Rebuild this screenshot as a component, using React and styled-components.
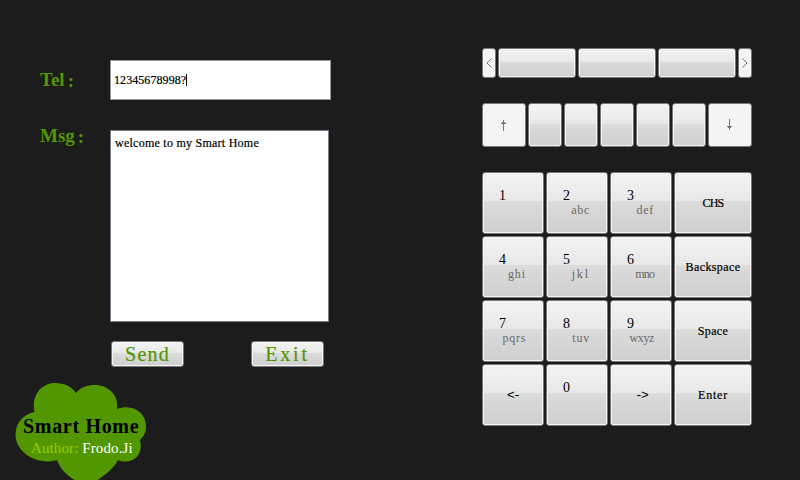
import React from "react";
import styled, { createGlobalStyle } from "styled-components";

const GlobalStyle = createGlobalStyle`
  * { box-sizing: border-box; }
  body { margin: 0; background: #1c1c1c; }
`;

const Screen = styled.main`
  width: 800px;
  height: 480px;
  display: grid;
  grid-template-columns: 482px 270px;
  overflow: hidden;
  background: #1c1c1c;
  font-family: "Liberation Serif", serif;
  font-size: 12px;
  color: #000;
`;

const Composer = styled.section`
  display: flex;
  flex-direction: column;
  height: 480px;
  padding-top: 60px;
`;

const Field = styled.div`
  display: grid;
  grid-template-columns: 70px auto;
  justify-content: start;
  padding-left: 40px;
  margin-bottom: ${(p) => p.$after}px;
`;

const Label = styled.label`
  display: flex;
  height: 24px;
  margin-top: ${(p) => p.$top}px;
  font-size: 19px;
  line-height: 24px;
  font-weight: bold;
  color: #529600;
`;

const Colon = styled.span`
  margin-left: 3px;
  line-height: 26px;
`;

const TelBox = styled.div`
  display: flex;
  align-items: center;
  width: 221px;
  height: 40px;
  padding-left: 3px;
  border: 1px solid #989599;
  background: #fff;
  letter-spacing: 0.07px;
  -webkit-text-stroke: 0.2px #000;
`;

const Caret = styled.span`
  width: 1px;
  height: 12px;
  background: #000;
`;

const MsgBox = styled.div`
  width: 219px;
  height: 192px;
  padding: 5px 4px;
  border: 1px solid #7a7d8a;
  background: #fff;
  line-height: 15px;
  letter-spacing: 0.25px;
  -webkit-text-stroke: 0.2px #000;
`;

const Actions = styled.div`
  display: flex;
  gap: 67px;
  padding-left: 111px;
`;

const Raised = styled.button`
  display: flex;
  align-items: center;
  justify-content: center;
  min-width: 0;
  padding: 0;
  border: 1px solid #777;
  border-radius: 3px;
  box-shadow: inset 0 0 0 1px #f6f6f6;
  background: ${(p) =>
    p.$flat
      ? "#f4f4f4"
      : "linear-gradient(#f3f3f3 0, #e8e8e8 47%, #dcdcdc 47%, #cecece 100%)"};
  color: inherit;
  font: inherit;
`;

const ActionButton = styled(Raised)`
  width: 73px;
  height: 26px;
  font-size: 20px;
  line-height: 24px;
  letter-spacing: ${(p) => p.$track}px;
  color: #529600;
  -webkit-text-stroke: 0.2px #529600;
`;

const Brand = styled.footer`
  display: grid;
  margin-top: auto;
  width: 160px;
  height: 100px;
  > * { grid-area: 1 / 1; }
`;

const Cloud = styled.svg`
  filter: blur(0.6px);
`;

const BrandText = styled.div`
  z-index: 1;
  padding: 35px 0 0 23px;
`;

const Title = styled.div`
  font-size: 20px;
  line-height: 23px;
  font-weight: bold;
  letter-spacing: 0.68px;
  white-space: nowrap;
`;

const Author = styled.div`
  padding-left: 8px;
  font-size: 15px;
  line-height: 20px;
  letter-spacing: 0.11px;
  color: #99cc00;
  white-space: nowrap;
`;

const Name = styled.span`
  color: #fff;
`;

const Keyboard = styled.section`
  display: flex;
  flex-direction: column;
  gap: 25px;
  padding-top: 48px;
`;

const Keys = styled.div`
  display: grid;
  gap: 2px;
  grid-template-columns: ${(p) => p.$columns};
  grid-auto-rows: ${(p) => p.$height}px;
`;

const DigitKey = styled(Raised)`
  flex-direction: column;
  align-items: stretch;
  justify-content: flex-start;
  padding: 15px 17px 0 16px;
`;

const Digit = styled.span`
  font-size: 14px;
  line-height: 16px;
  text-align: left;
`;

const Letters = styled.span`
  align-self: flex-end;
  line-height: 12px;
  letter-spacing: ${(p) => p.$track}px;
  color: #686868;
`;

const WordKey = styled(Raised)`
  letter-spacing: ${(p) => p.$track}px;
  -webkit-text-stroke: 0.2px #000;
`;

const Glyph = styled.svg`
  width: ${(p) => p.$w}px;
  height: 12px;
  fill: none;
  stroke: #777;
  stroke-width: 1;
`;

const SymbolKey = styled(Raised)`
  font-family: "Liberation Mono", monospace;
  font-size: 13px;
  letter-spacing: -1.8px;
`;

function Chevron({ right }) {
  return (
    <Glyph $w={6} viewBox="0 0 6 12">
      <path d={right ? "M.5 1.5 5 6 .5 10.5" : "M5.5 1.5 1 6l4.500 4.500"} />
    </Glyph>
  );
}

function Arrow({ down }) {
  return (
    <Glyph $w={8} viewBox="0 0 8 12">
      <path d={down ? "M3.500 0v11M1 7.500h5M2 8.500h3" : "M3.500 1v11M2 3.500h3M1 4.500h5"} />
    </Glyph>
  );
}

const pad = [
  ["1", ""], ["2", "abc", 0.7], ["3", "def", 0.7], ["CHS", -0.8],
  ["4", "ghi", 0.9], ["5", "jkl", 1.9], ["6", "mno", -0.9], ["Backspace", 0.4],
  ["7", "pqrs", 0.7], ["8", "tuv", 0.8], ["9", "wxyz", -0.4], ["Space", 0.4],
  ["<-"], ["0", ""], ["->"], ["Enter", 0.8],
];

function PadKey({ item }) {
  const [text, second, track = 0] = item;
  if (item.length === 1) return <SymbolKey>{text}</SymbolKey>;
  if (typeof second === "number") return <WordKey $track={second}>{text}</WordKey>;
  return (
    <DigitKey>
      <Digit>{text}</Digit>
      {second && <Letters $track={track}>{second}</Letters>}
    </DigitKey>
  );
}

export default function App() {
  return (
    <Screen>
      <GlobalStyle />
      <Composer>
        <Field $after={30}>
          <Label $top={8}>Tel<Colon>:</Colon></Label>
          <TelBox>12345678998?<Caret /></TelBox>
        </Field>
        <Field $after={19}>
          <Label $top={-6}>Msg<Colon>:</Colon></Label>
          <MsgBox>welcome to my Smart Home</MsgBox>
        </Field>
        <Actions>
          <ActionButton $track={1.2}>Send</ActionButton>
          <ActionButton $track={2.8}>Exit</ActionButton>
        </Actions>
        <Brand>
          <Cloud width="160" height="100" viewBox="0 380 160 100">
            <path
              fill="#529600"
              d="M34.500 412C31 396 41 383 55 383C65 383 72 387 76 393C81 387 87 385 95 385C109 385 119 396 117 409C133 403 146 413 146 426C146 432 144 436 140 440C144 454 133 466 118 460C113 470 103 476 95 482H78C68 477 60 469 57 460C38 466 15 453 15.500 434C16 422 24 414 34.500 412Z"
            />
          </Cloud>
          <BrandText>
            <Title>Smart Home</Title>
            <Author>Author: <Name>Frodo.Ji</Name></Author>
          </BrandText>
        </Brand>
      </Composer>
      <Keyboard>
        <Keys $columns="14px repeat(3, 78px) 14px" $height={30}>
          <Raised $flat><Chevron /></Raised>
          <Raised /><Raised /><Raised />
          <Raised $flat><Chevron right /></Raised>
        </Keys>
        <Keys $columns="44px repeat(5, 34px) 44px" $height={44}>
          <Raised $flat><Arrow /></Raised>
          <Raised /><Raised /><Raised /><Raised /><Raised />
          <Raised $flat><Arrow down /></Raised>
        </Keys>
        <Keys $columns="repeat(3, 62px) 78px" $height={62}>
          {pad.map((item) => <PadKey key={item[0]} item={item} />)}
        </Keys>
      </Keyboard>
    </Screen>
  );
}
